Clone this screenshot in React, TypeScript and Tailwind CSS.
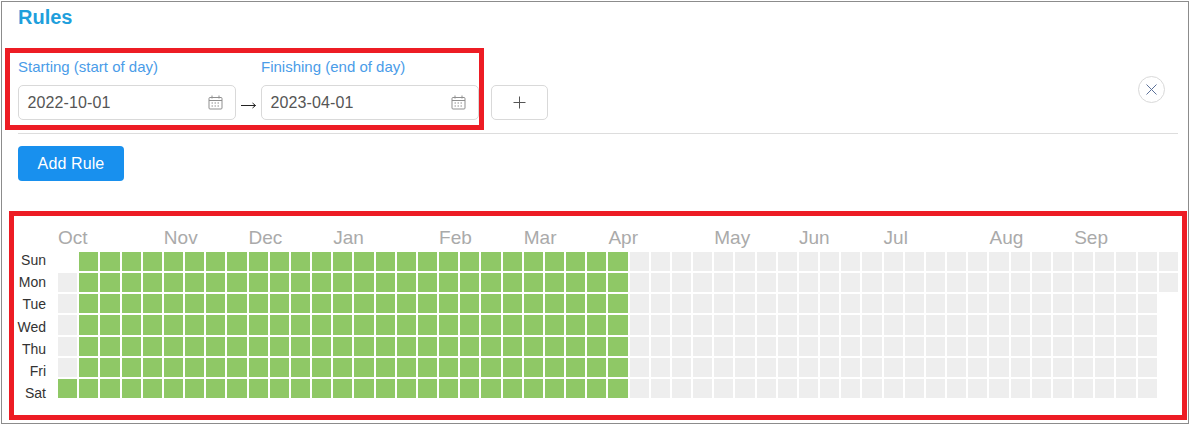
const months = [
  { label: "Oct", col: 0 },
  { label: "Nov", col: 5 },
  { label: "Dec", col: 9 },
  { label: "Jan", col: 13 },
  { label: "Feb", col: 18 },
  { label: "Mar", col: 22 },
  { label: "Apr", col: 26 },
  { label: "May", col: 31 },
  { label: "Jun", col: 35 },
  { label: "Jul", col: 39 },
  { label: "Aug", col: 44 },
  { label: "Sep", col: 48 },
];

const days = ["Sun", "Mon", "Tue", "Wed", "Thu", "Fri", "Sat"];

function cellClass(col: number, row: number) {
  // cells outside the year stay blank
  if (col === 0 && row === 0) return "";
  if (col === 52 && row > 1) return "";
  if (col === 0 && row < 6) return "bg-[#eeeeee]";
  if (col <= 26) return "bg-[#8fc866]";
  return "bg-[#eeeeee]";
}

function CalendarIcon() {
  return (
    <svg width="15" height="15" viewBox="0 0 15 15" fill="none" stroke="#8f8f8f" strokeWidth="1">
      <rect x="1" y="2.5" width="13" height="11.5" rx="1" />
      <path d="M1 5.5h13M4 0.5v3M11 0.5v3" />
      <path d="M3.5 8h2M6.5 8h2M9.5 8h2M3.5 11h2M6.5 11h2M9.5 11h2" strokeDasharray="1.5 0.5" />
    </svg>
  );
}

function DateField({ label, value }: { label: string; value: string }) {
  return (
    <div className="w-[218px] shrink-0">
      <div className="h-[28px] text-[15px] leading-[28px] whitespace-nowrap text-[#4a9ce8]">{label}</div>
      <div className="mt-1 flex h-[35px] items-center justify-between rounded-[5px] border border-[#d9d9d9] bg-white pr-[12px] pl-[8.5px] text-[16px] tracking-[0.12px] text-[#555555]">
        <span>{value}</span>
        <CalendarIcon />
      </div>
    </div>
  );
}

export default function App() {
  return (
    <div className="mt-px ml-px h-[423px] w-[1188px] border border-[#8c8c8c] bg-white font-['Liberation_Sans',Arial,sans-serif]">
      <h2 className="ml-4 h-[30px] text-[20px] leading-[30px] font-bold text-[#1f9fdc]">Rules</h2>

      <div className="mt-4 ml-[3px] flex items-start">
        <div className="flex h-[82px] w-[479px] shrink-0 border-[5px] border-[#ed1c24] pl-[8px]">
          <DateField label="Starting (start of day)" value="2022-10-01" />
          <div className="flex h-[67px] w-[25px] shrink-0 items-end justify-center pb-[11px]">
            <svg width="15" height="7" viewBox="0 0 15 7" fill="none" stroke="#222222" strokeWidth="1">
              <path d="M0 3.5h14.5M11.5 1l3 2.5-3 2.5" />
            </svg>
          </div>
          <DateField label="Finishing (end of day)" value="2023-04-01" />
        </div>
        <button className="mt-[37px] ml-[7px] flex h-[35px] w-[57px] items-center justify-center rounded-[5px] border border-[#d9d9d9] bg-white">
          <svg width="13" height="13" viewBox="0 0 13 13" stroke="#555555" strokeWidth="1">
            <path d="M6.5 0.5v12M0.5 6.5h12" />
          </svg>
        </button>
        <button className="mt-[28px] mr-[23px] ml-auto flex h-[27px] w-[27px] items-center justify-center rounded-full border border-[#d9d9d9] bg-white">
          <svg width="11" height="11" viewBox="0 0 11 11" stroke="#5c7199" strokeWidth="1">
            <path d="M0.5 0.5l10 10M10.5 0.5l-10 10" />
          </svg>
        </button>
      </div>

      <div className="mt-[3px] ml-4 h-px w-[1160px] bg-[#dddddd]" />

      <button className="mt-3 ml-4 block h-[35px] w-[106px] rounded-[4px] bg-[#1890ee] text-[16px] tracking-[0.12px] text-white">
        Add Rule
      </button>

      <div className="mt-[30px] ml-[7px] flex h-[209px] w-[1178px] border-[5px] border-[#ed1c24]">
        <div className="mt-[33px] w-[32px] shrink-0 text-right text-[14px] leading-[22.17px] text-[#333333]">
          {days.map((d) => (
            <div key={d}>{d}</div>
          ))}
        </div>
        <div className="ml-3 w-[1120px] shrink-0">
          <div className="mt-[11px] grid h-[22px] grid-cols-[repeat(53,minmax(0,1fr))] gap-x-[2px] text-[19px] leading-[22px] text-[#aaaaaa]">
            {months.map((m) => (
              <div key={m.label} className="whitespace-nowrap" style={{ gridColumnStart: m.col + 1, gridRowStart: 1 }}>
                {m.label}
              </div>
            ))}
          </div>
          <div className="mt-[3px] grid h-[146px] grid-flow-col grid-cols-[repeat(53,minmax(0,1fr))] grid-rows-7 gap-[2px]">
            {Array.from({ length: 53 * 7 }, (_, i) => (
              <div key={i} className={cellClass(Math.floor(i / 7), i % 7)} />
            ))}
          </div>
        </div>
      </div>
    </div>
  );
}
